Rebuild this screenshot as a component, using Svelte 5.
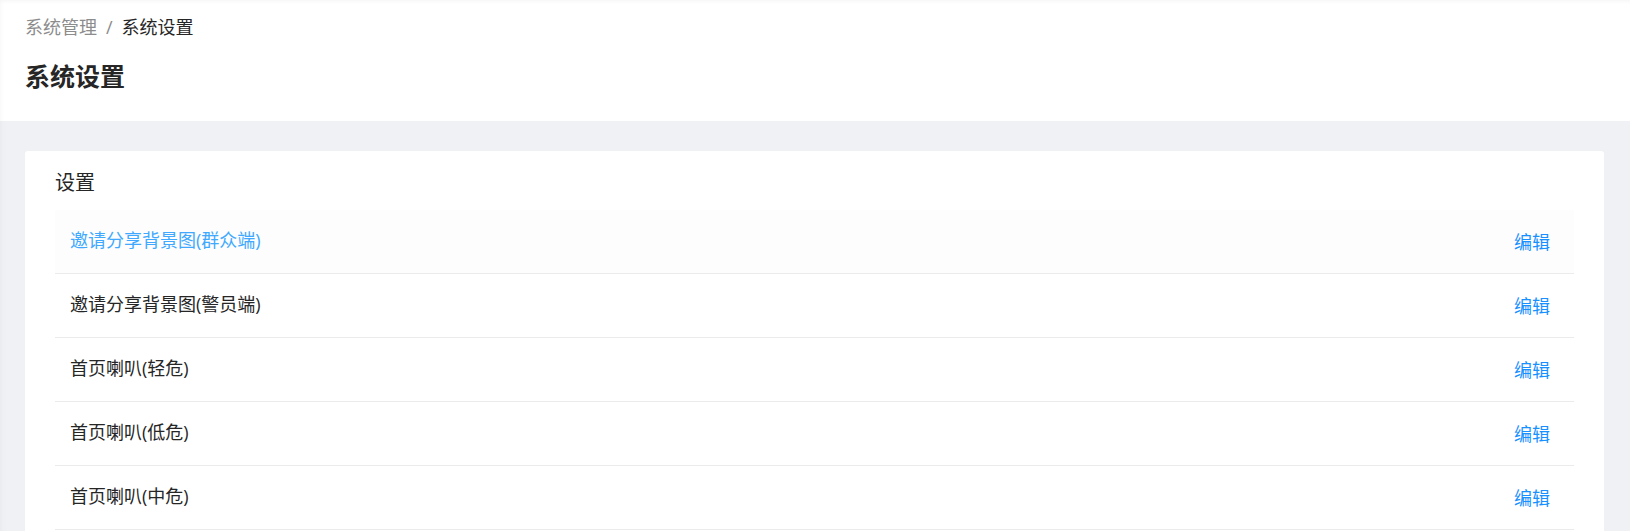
<script>
  const items = ['邀请分享背景图(群众端)', '邀请分享背景图(警员端)', '首页喇叭(轻危)', '首页喇叭(低危)', '首页喇叭(中危)'];
</script>

<div class="page">
  <header>
    <nav aria-label="breadcrumb">
      <a href="#system">系统管理</a><span class="sep">/</span><span class="current">系统设置</span>
    </nav>
    <h1>系统设置</h1>
  </header>
  <main>
    <section>
      <h2>设置</h2>
      <ul>
        {#each items as item, i}
          <li class:active={i === 0}>
            <span class="name">{item}</span>
            <button type="button">编辑</button>
          </li>
        {/each}
      </ul>
    </section>
  </main>
</div>

<style>
  :global(body) {
    background: #f0f1f5;
    overflow: hidden;
  }
  .page {
    font-family: "Open Sans", "Noto Sans CJK SC", sans-serif;
    font-size: 18px;
    font-weight: 400;
    line-height: 28px;
    color: #262626;
    box-shadow: inset 6px 0 6px -6px #e4e6ea;
  }
  header {
    background: #fff;
    padding: 13px 25px 27px;
    box-shadow: inset 0 4px 4px -3px #f4f4f4, inset 4px 0 4px -3px #f7f7f7;
  }
  nav {
    display: flex;
    gap: 9px;
  }
  nav a, .sep {
    color: #8c8c8c;
    text-decoration: none;
  }
  h1 {
    margin: 17px 0 0;
    font-size: 25px;
    line-height: 36px;
    font-weight: 700;
  }
  main {
    padding: 30px 26px 0 25px;
  }
  section {
    background: #fff;
    border-radius: 3px;
    padding: 17px 30px;
  }
  h2 {
    margin: 0;
    font-size: 20px;
    line-height: 30px;
    font-weight: 400;
  }
  ul {
    list-style: none;
    margin: 12px 0 0;
    padding: 0;
  }
  li {
    display: flex;
    justify-content: space-between;
    align-items: center;
    height: 63px;
    padding: 0 24px 0 15px;
    border-bottom: 1px solid #ebebeb;
  }
  .active {
    background: #fdfdfd;
  }
  .name {
    padding-bottom: 4px;
  }
  .active .name {
    color: #40a9ff;
  }
  button {
    border: 0;
    padding: 0;
    background: none;
    font: inherit;
    color: #1890ff;
    cursor: pointer;
  }
</style>
